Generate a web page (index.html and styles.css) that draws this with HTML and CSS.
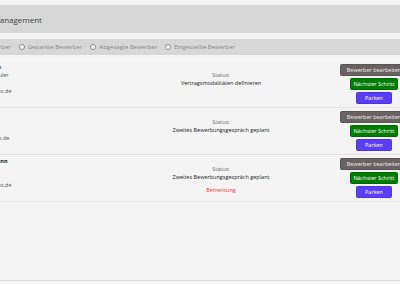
FILE: index.html
```html
<!DOCTYPE html>
<html lang="de">
<head>
    <meta charset="UTF-8">
    <meta name="viewport" content="width=device-width, initial-scale=1.0">
    <title>Bewerbermanagement</title>
    <link rel="stylesheet" href="styles.css">
</head>
<body>
    <div class="page">
        <div class="title">Bewerbermanagement</div>

        <div class="filters">
            <label class="filter"><span class="radio"></span>Aktive Bewerber</label>
            <label class="filter"><span class="radio"></span>Geparkte Bewerber</label>
            <label class="filter"><span class="radio"></span>Abgesagte Bewerber</label>
            <label class="filter"><span class="radio"></span>Eingestellte Bewerber</label>
        </div>

        <div class="list">
            <div class="card">
                <div class="person">
                    <div class="name">Lisa Krause</div>
                    <div class="job">Projektkalkuler</div>
                    <div class="phone">&nbsp;</div>
                    <div class="mail">lange@demo.de</div>
                </div>
                <div class="status">
                    <div class="label">Status:</div>
                    <div class="value">Vertragsmodalitäten definieren</div>
                </div>
                <div class="actions">
                    <button class="btn edit">Bewerber bearbeiten</button>
                    <button class="btn next">Nächster Schritt</button>
                    <button class="btn park">Parken</button>
                </div>
            </div>

            <div class="card">
                <div class="person">
                    <div class="name">Tom</div>
                    <div class="job">&nbsp;</div>
                    <div class="phone">&nbsp;</div>
                    <div class="mail">berg@demo.de</div>
                </div>
                <div class="status">
                    <div class="label">Status:</div>
                    <div class="value">Zweites Bewerbungsgespräch geplant</div>
                </div>
                <div class="actions">
                    <button class="btn edit">Bewerber bearbeiten</button>
                    <button class="btn next">Nächster Schritt</button>
                    <button class="btn park">Parken</button>
                </div>
            </div>

            <div class="card">
                <div class="person">
                    <div class="name">Tim Hermann</div>
                    <div class="job">&nbsp;</div>
                    <div class="phone">&nbsp;</div>
                    <div class="mail">herm@demo.de</div>
                </div>
                <div class="status">
                    <div class="label">Status:</div>
                    <div class="value">Zweites Bewerbungsgespräch geplant</div>
                    <div class="note">Bemerkung</div>
                </div>
                <div class="actions">
                    <button class="btn edit">Bewerber bearbeiten</button>
                    <button class="btn next">Nächster Schritt</button>
                    <button class="btn park">Parken</button>
                </div>
            </div>
        </div>
    </div>
</body>
</html>
```

FILE: styles.css
```css
* {
    box-sizing: border-box;
}

body {
    margin: 0;
    background: #f4f4f4;
    font-family: "Open Sans", "Liberation Sans", sans-serif;
    color: #333;
    overflow: hidden;
    height: 284px;
}

.page {
    margin-left: -60px;
    width: 480px;
    padding-top: 5px;
}

.title {
    height: 28px;
    background: #d7d7d7;
    padding-left: 16px;
    display: flex;
    align-items: center;
    font-size: 8px;
    color: #444;
}

.filters {
    margin-top: 6px;
    height: 16px;
    background: #d7d7d7;
    display: flex;
    align-items: center;
    gap: 8px;
    padding-left: 16px;
    font-size: 6px;
    color: #888;
}

.filter {
    display: flex;
    align-items: center;
}

.radio {
    width: 6px;
    height: 6px;
    border: 1px solid #888;
    border-radius: 50%;
    margin-right: 3px;
    background: #fff;
}

.list {
    margin-top: 5px;
    height: 221px;
    border-top: 1px solid #fafafa;
    border-bottom: 1px solid #dcdcdc;
}

.card {
    display: grid;
    grid-template-columns: 163px 1fr 70px;
    padding: 2px 11px 3px 0;
    border-bottom: 1px solid #e2e2e2;
    font-size: 5.5px;
    line-height: 8px;
}

.person {
    padding-left: 30px;
}

.name {
    font-weight: bold;
    color: #222;
}

.card:first-child .name {
    color: #1f3c88;
}

.job, .mail, .phone {
    color: #555;
}

.status {
    text-align: center;
    padding-top: 8px;
}

.label {
    color: #666;
}

.value {
    color: #222;
}

.note {
    color: #f33;
    margin-top: 5px;
}

.actions {
    display: flex;
    flex-direction: column;
    align-items: center;
    gap: 2px;
    padding-top: 1px;
}

.btn {
    border: 1px solid rgba(0, 0, 0, 0.15);
    border-radius: 2px;
    font-family: inherit;
    font-size: 5.5px;
    height: 12px;
    padding: 0 5px;
    color: #fff;
    white-space: nowrap;
    cursor: pointer;
}

.edit {
    background: #6a6262;
    color: #eee;
    width: 68px;
}

.next {
    background: #007c00;
    padding: 0 2px;
}

.park {
    background: #5b3dff;
    width: 36px;
}
```
